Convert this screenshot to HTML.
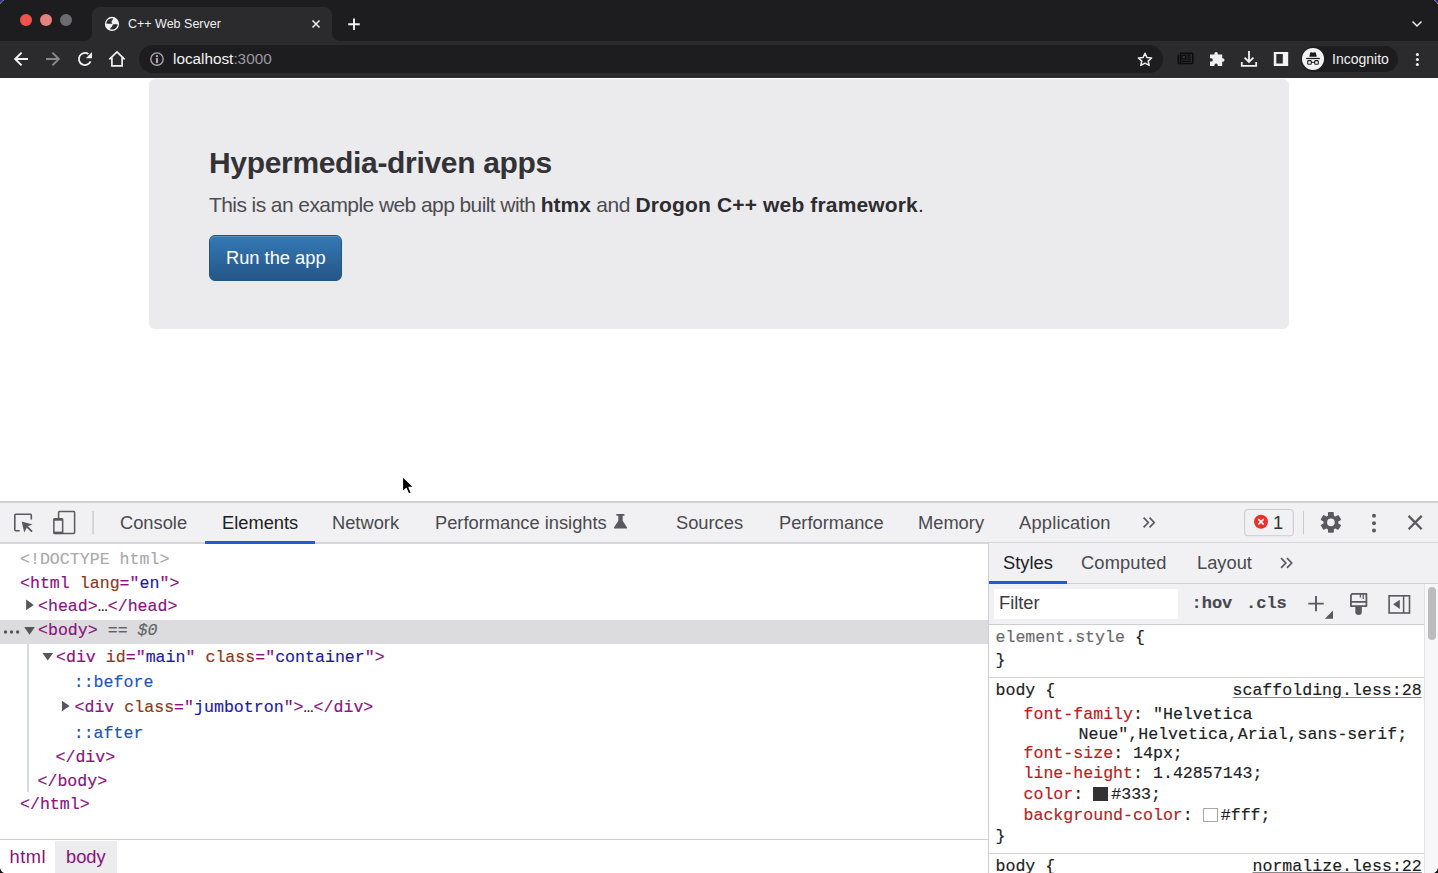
<!DOCTYPE html>
<html><head><meta charset="utf-8">
<style>
*{box-sizing:border-box}
html,body{margin:0;padding:0}
body{width:1438px;height:873px;overflow:hidden;position:relative;background:#fff;font-family:"Liberation Sans",sans-serif}
.a{position:absolute}
svg{position:absolute;overflow:visible}
/* browser chrome */
#frame{left:0;top:0;width:1438px;height:41px;background:#1d1d20}
.tl{width:12px;height:12px;border-radius:50%;top:14px}
#tab{left:92px;top:7px;width:240px;height:34px;background:#2b2b2e;border-radius:8px 8px 0 0}
#tabttl{left:128px;top:16px;font-size:12.5px;color:#f1f1f1;white-space:nowrap;line-height:16px}
#toolbar{left:0;top:41px;width:1438px;height:37px;background:#2b2b2e}
#omni{left:139px;top:45px;width:1024px;height:28px;background:#1d1d20;border-radius:14px}
#url{left:173px;top:51px;font-size:15.3px;line-height:16px;color:#f4f4f4;white-space:nowrap}
#url span{color:#9a999e}
#incog{left:1301px;top:46px;width:97px;height:26px;background:#1d1d20;border-radius:14px}
#incogtxt{left:1332px;top:51px;font-size:14px;line-height:16px;color:#f0f0f0;white-space:nowrap}
/* page */
#jumbo{left:149px;top:79px;width:1140px;height:250px;background:#ebebed;border-radius:6px}
#h1{left:209px;top:145px;font-size:30px;letter-spacing:-0.33px;font-weight:bold;color:#333236;line-height:36px;white-space:nowrap}
.lt{letter-spacing:-0.58px;color:#4d4c50}
#lead{left:209px;top:191px;font-size:21px;line-height:28px;color:#2d2c30;white-space:nowrap}
#btn{left:209px;top:235px;width:133px;height:46px;border-radius:6px;background:linear-gradient(#3479b5,#255687);border:1px solid #245580;box-shadow:inset 0 1px 0 rgba(255,255,255,.18)}
#btntxt{left:226px;top:248px;font-size:18.3px;line-height:20px;color:#fff;white-space:nowrap}
/* devtools */
#dt{left:0;top:502px;width:1438px;height:371px;background:#fff}
#dtbar{left:0;top:501px;width:1438px;height:43px;background:#f1f1f3;border-top:2px solid #d0cfd3;border-bottom:2px solid #d6d5d9}
.tabt{top:513px;font-size:18.3px;line-height:20px;color:#4a494e;white-space:nowrap}
.mono{font-family:"Liberation Mono",monospace;font-size:16.6px;line-height:20px;white-space:nowrap;-webkit-text-stroke:0.15px}
.tag{color:#881280}.pn{color:#b9201c}.an{color:#8c3819}.av{color:#1a1aa6}.ps{color:#1d55b8}
#stylespane{left:988px;top:543px;width:450px;height:330px;background:#fff;border-left:1px solid #cfced2}
</style></head><body>

<div id="frame" class="a"></div>
<div class="a tl" style="left:20px;background:#f0534c"></div>
<div class="a tl" style="left:40px;background:#e4837e"></div>
<div class="a tl" style="left:60px;background:#6c6b6f"></div>
<div class="a" style="left:84px;top:33px;width:8px;height:8px;background:radial-gradient(circle at 0 0,#1d1d20 7.5px,#2b2b2e 8.5px)"></div>
<div class="a" style="left:332px;top:33px;width:8px;height:8px;background:radial-gradient(circle at 100% 0,#1d1d20 7.5px,#2b2b2e 8.5px)"></div>
<div id="tab" class="a"></div>
<div id="tabttl" class="a">C++ Web Server</div>

<div id="toolbar" class="a"></div>
<div id="omni" class="a"></div>
<div id="url" class="a">localhost<span>:3000</span></div>
<div id="incog" class="a"></div>
<div id="incogtxt" class="a">Incognito</div>

<div id="jumbo" class="a"></div>
<div id="h1" class="a">Hypermedia-driven apps</div>
<div id="lead" class="a"><span class="lt">This is an example web app built with </span><b>htmx</b><span class="lt" style="letter-spacing:-0.42px"> and </span><b style="letter-spacing:0.15px">Drogon C++ web framework</b>.</div>
<div id="btn" class="a"></div>
<div id="btntxt" class="a">Run the app</div>

<div id="dt" class="a"></div>
<div id="dtbar" class="a"></div>
<div class="a" style="left:205px;top:541px;width:110px;height:3px;background:#1a5fd8"></div>
<div class="a tabt" style="left:120px">Console</div>
<div class="a tabt" style="left:222px;color:#202124">Elements</div>
<div class="a tabt" style="left:332px">Network</div>
<div class="a tabt" style="left:435px">Performance insights</div>
<div class="a tabt" style="left:676px">Sources</div>
<div class="a tabt" style="left:779px">Performance</div>
<div class="a tabt" style="left:918px">Memory</div>
<div class="a tabt" style="left:1019px;letter-spacing:0.2px">Application</div>

<div id="stylespane" class="a"></div>
<div class="a" style="left:1273px;top:513px;font-size:18.3px;line-height:20px;color:#333">1</div>

<div class="a" style="left:0;top:620px;width:988px;height:24px;background:#dcdcdf"></div>
<div class="a" style="left:27px;top:644px;width:2px;height:148px;background:#d5d9e2"></div>
<div class="a mono" style="left:20px;top:550px;color:#a9a8ad">&lt;!DOCTYPE html&gt;</div>
<div class="a mono" style="left:20px;top:573.5px"><span class="tag">&lt;html</span> <span class="an">lang</span><span class="tag">="</span><span class="av">en</span><span class="tag">"&gt;</span></div>
<div class="a mono" style="left:38px;top:597px"><span class="tag">&lt;head&gt;</span><span style="color:#202124">…</span><span class="tag">&lt;/head&gt;</span></div>
<div class="a mono" style="left:38px;top:621px"><span class="tag">&lt;body&gt;</span> <span style="color:#5f6368">==</span> <i style="color:#5f6368">$0</i></div>
<div class="a mono" style="left:56px;top:648px"><span class="tag">&lt;div</span> <span class="an">id</span><span class="tag">="</span><span class="av">main</span><span class="tag">"</span> <span class="an">class</span><span class="tag">="</span><span class="av">container</span><span class="tag">"&gt;</span></div>
<div class="a mono ps" style="left:73.7px;top:673px">::before</div>
<div class="a mono" style="left:74.5px;top:697.5px"><span class="tag">&lt;div</span> <span class="an">class</span><span class="tag">="</span><span class="av">jumbotron</span><span class="tag">"&gt;</span><span style="color:#202124">…</span><span class="tag">&lt;/div&gt;</span></div>
<div class="a mono ps" style="left:73.7px;top:723.5px">::after</div>
<div class="a mono tag" style="left:55.5px;top:748px">&lt;/div&gt;</div>
<div class="a mono tag" style="left:37.5px;top:771.7px">&lt;/body&gt;</div>
<div class="a mono tag" style="left:20px;top:795.3px">&lt;/html&gt;</div>

<div class="a" style="left:0;top:839px;width:988px;height:1px;background:#cfced2"></div>
<div class="a" style="left:55px;top:841px;width:62px;height:32px;background:#ececee"></div>
<div class="a tag" style="left:9.5px;top:847.4px;font-size:18.3px;line-height:20px;letter-spacing:0.5px">html</div>
<div class="a tag" style="left:66px;top:847.4px;font-size:18.3px;line-height:20px">body</div>

<div class="a" style="left:989px;top:543px;width:449px;height:41px;background:#f1f1f3;border-bottom:1px solid #cfced2"></div>
<div class="a" style="left:989px;top:581px;width:78px;height:3px;background:#1a5fd8"></div>
<div class="a tabt" style="left:1003px;top:553px;color:#202124">Styles</div>
<div class="a tabt" style="left:1081px;top:553px;letter-spacing:0.15px">Computed</div>
<div class="a tabt" style="left:1197px;top:553px">Layout</div>
<div class="a" style="left:989px;top:584px;width:436px;height:41px;background:#f1f1f3;border-bottom:1px solid #cfced2"></div>
<div class="a" style="left:994px;top:589px;width:184px;height:30px;background:#fff"></div>
<div class="a" style="left:999px;top:593px;font-size:18.3px;line-height:20px;color:#3c3b40">Filter</div>
<div class="a mono" style="left:1191.5px;top:594px;font-size:17px;font-weight:bold;color:#48474d">:hov</div>
<div class="a mono" style="left:1246px;top:594px;font-size:17px;font-weight:bold;color:#48474d">.cls</div>
<div class="a" style="left:1425px;top:584px;width:13px;height:289px;background:#f7f7f9"></div>
<div class="a" style="left:1424px;top:584px;width:1px;height:289px;background:#e3e3e6"></div>
<div class="a" style="left:1428px;top:587px;width:8px;height:53px;border-radius:4px;background:#bcbcbf"></div>

<div class="a mono" style="left:995.5px;top:628px;color:#6b6a6f">element.style <span style="color:#202124">{</span></div>
<div class="a mono" style="left:995.5px;top:651.2px;color:#202124">}</div>
<div class="a" style="left:989px;top:677px;width:435px;height:1px;background:#d5d4d8"></div>
<div class="a mono" style="left:995.5px;top:681px;color:#202124">body {</div>
<div class="a mono" style="left:1232.5px;top:681px;color:#202124;text-decoration:underline;text-decoration-color:#8a898e;text-underline-offset:1.5px">scaffolding.less:28</div>
<div class="a mono" style="left:1023.5px;top:705px;color:#202124"><span class="pn">font-family</span>: "Helvetica</div>
<div class="a mono" style="left:1078.5px;top:724.5px;color:#202124">Neue",Helvetica,Arial,sans-serif;</div>
<div class="a mono" style="left:1023.5px;top:743.5px;color:#202124"><span class="pn">font-size</span>: 14px;</div>
<div class="a mono" style="left:1023.5px;top:764px;color:#202124"><span class="pn">line-height</span>: 1.42857143;</div>
<div class="a mono" style="left:1023.5px;top:785.4px;color:#202124"><span class="pn">color</span>: <span style="display:inline-block;width:15px;height:14px;vertical-align:-2px;background:#333;margin-right:3px"></span>#333;</div>
<div class="a mono" style="left:1023.5px;top:806px;color:#202124"><span class="pn">background-color</span>: <span style="display:inline-block;width:15px;height:14px;vertical-align:-2px;background:#fff;border:1px solid #a8a7ac;margin-right:3px"></span>#fff;</div>
<div class="a mono" style="left:995.5px;top:827.3px;color:#202124">}</div>
<div class="a" style="left:989px;top:853px;width:435px;height:1px;background:#d5d4d8"></div>
<div class="a mono" style="left:995.5px;top:856.7px;color:#202124">body {</div>
<div class="a mono" style="left:1252.5px;top:856.7px;color:#202124;text-decoration:underline;text-decoration-color:#8a898e">normalize.less:22</div>



<svg class="a" style="left:0;top:0" width="1438" height="873" viewBox="0 0 1438 873">
 <!-- globe -->
 <defs><clipPath id="gc"><circle cx="112" cy="23.9" r="5.7"/></clipPath></defs>
 <circle cx="112" cy="23.9" r="7.1" fill="#f2f2f2"/>
 <g clip-path="url(#gc)" fill="#2b2b2e">
  <path d="M106 23.7 V18 H113.4 L112.4 20.3 Q111 21 111.6 22.3 L112.4 23.7 Z"/>
  <path d="M118 24.2 V30 H110 L110.6 27.7 Q112.6 26.8 112.4 25.4 L113.2 24.2 Z"/>
 </g>
 <!-- tab close -->
 <path d="M312.5 20.5 L319.5 27.5 M319.5 20.5 L312.5 27.5" stroke="#f0f0f0" stroke-width="1.5"/>
 <!-- new tab -->
 <path d="M354 18.5 V30 M348.2 24.2 H359.8" stroke="#f4f4f4" stroke-width="1.9"/>
 <!-- chevron -->
 <path d="M1412.5 21.5 L1417 26 L1421.5 21.5" stroke="#f0f0f0" stroke-width="1.5" fill="none"/>
 <!-- back / fwd -->
 <path d="M28 59 H15.5 M21.6 52.6 L15.2 59 L21.6 65.4" stroke="#f2f2f2" stroke-width="2" fill="none"/>
 <path d="M46 59 H58.5 M52.4 52.6 L58.8 59 L52.4 65.4" stroke="#88878b" stroke-width="2" fill="none"/>
 <!-- reload -->
 <path d="M90.6 61.4 A6.1 6.1 0 1 1 88.4 53.9" stroke="#f2f2f2" stroke-width="1.8" fill="none"/>
 <path d="M92 52 V58.2 H85.9 Z" fill="#f2f2f2"/>
 <!-- home -->
 <path d="M109.3 59.4 L117 51.9 L124.7 59.4" stroke="#f2f2f2" stroke-width="1.7" fill="none"/>
 <path d="M111.9 57.2 V65.9 H122.1 V57.2" stroke="#f2f2f2" stroke-width="1.7" fill="none"/>
 <!-- info -->
 <circle cx="157" cy="59.1" r="6.2" stroke="#aaa4ae" stroke-width="1.4" fill="none"/>
 <rect x="155.9" y="55.1" width="2.2" height="2" fill="#aaa4ae"/>
 <rect x="155.9" y="58.1" width="2.2" height="5" fill="#aaa4ae"/>
 <!-- star -->
 <path d="M1145 53.3 L1147 57.6 L1151.6 58 L1148.2 61.1 L1149.2 65.4 L1145 63.2 L1140.8 65.4 L1141.8 61.1 L1138.4 58 L1143 57.6 Z" stroke="#ececec" stroke-width="1.5" fill="none" stroke-linejoin="round"/>
 <!-- news (dark) -->
 <path d="M1178.3 54.8 V62.6 a0.9 0.9 0 0 0 .9 .9 H1191.9 a0.9 0.9 0 0 0 .9 -.9 V54.1 a0.9 0.9 0 0 0 -.9 -.9 H1180.6 V62.8" stroke="#0d0d0e" stroke-width="1.6" fill="none"/>
 <rect x="1182" y="55.4" width="3.6" height="3.6" stroke="#0d0d0e" stroke-width="1.4" fill="#3a3a3d"/>
 <path d="M1187.2 55.2 H1190.8 M1187.2 57.2 H1190.8 M1187.2 59.2 H1190.8 M1181.3 61.3 H1190.8" stroke="#0d0d0e" stroke-width="1.3"/>
 <!-- puzzle -->
 <path d="M1210 54.6 H1214.4 V53.6 a1.7 1.7 0 0 1 3.4 0 V54.6 H1222.2 V58.3 H1222.8 a1.7 1.7 0 0 1 0 3.4 H1222.2 V66 H1217.8 V65.3 a1.7 1.7 0 0 0 -3.4 0 V66 H1210 V61.5 H1211.2 a1.6 1.6 0 0 0 0 -3.2 H1210 Z" fill="#efefef"/>
 <!-- download -->
 <path d="M1249 51 V62.4 M1244.6 57.6 L1249 62 L1253.4 57.6 M1241.8 62 V65.8 H1256.2 V62" stroke="#f2f2f2" stroke-width="1.8" fill="none"/>
 <!-- side panel -->
 <path fill-rule="evenodd" d="M1273.8 51.9 H1288.2 V66 H1273.8 Z M1276.3 54.1 V63.6 H1282.8 V54.1 Z" fill="#f2f2f2"/>
 <!-- incognito -->
 <circle cx="1313" cy="58.9" r="11" fill="#f2f2f2"/>
 <path d="M1309.3 56.8 L1310.2 52.8 Q1310.5 52 1311.3 52.3 L1313 52.8 L1314.7 52.3 Q1315.5 52 1315.8 52.8 L1316.8 56.8 Z" fill="#1a1a1c"/>
 <rect x="1306.1" y="57.9" width="13.8" height="1.2" fill="#1a1a1c"/>
 <rect x="1307.7" y="60.6" width="3.6" height="3.7" rx="0.9" stroke="#1a1a1c" stroke-width="1.1" fill="none"/>
 <rect x="1314.7" y="60.6" width="3.6" height="3.7" rx="0.9" stroke="#1a1a1c" stroke-width="1.1" fill="none"/>
 <path d="M1311.3 62.3 H1314.7" stroke="#1a1a1c" stroke-width="1"/>
 <!-- kebab -->
 <circle cx="1417.4" cy="54.5" r="1.5" fill="#f2f2f2"/><circle cx="1417.4" cy="59.5" r="1.5" fill="#f2f2f2"/><circle cx="1417.4" cy="64.6" r="1.5" fill="#f2f2f2"/>

 <!-- cursor -->
 <path d="M402.5 476.5 L402.5 492 L406.2 488.4 L408.7 494 L411.4 492.9 L409 487.4 L414 487.4 Z" fill="#000" stroke="#fff" stroke-width="1.2" stroke-linejoin="round"/>

 <!-- devtools toolbar icons -->
 <path d="M19.7 530.7 H15.8 a1 1 0 0 1 -1 -1 V515.3 a1 1 0 0 1 1 -1 H30.3 a1 1 0 0 1 1 1 V519.4" stroke="#5b5960" stroke-width="1.6" fill="none"/>
 <path d="M21.7 521.4 L32.6 524.4 L27.6 526.2 L24.2 532.4 Z" fill="#5b5960"/>
 <path d="M27 526.6 L32 531.6" stroke="#5b5960" stroke-width="1.9"/>
 <path d="M58.6 518.2 V512.6 a1 1 0 0 1 1 -1 H73.6 a1 1 0 0 1 1 1 V532.4 a1 1 0 0 1 -1 1 H62.5" stroke="#5b5960" stroke-width="1.5" fill="none"/>
 <rect x="53.85" y="518.85" width="8.8" height="14.6" rx="1" stroke="#5b5960" stroke-width="1.5" fill="none"/>
 <rect x="53.5" y="518.5" width="9.6" height="2.2" fill="#5b5960"/>
 <rect x="53.5" y="531.6" width="9.6" height="2.5" fill="#5b5960"/>
 <rect x="92.4" y="511" width="1.3" height="23.4" fill="#c9c7cd"/>
 <!-- flask -->
 <path d="M616.4 514.1 H624.4 V515.8 H622.7 V520.8 L627 527.6 V528.5 H614 V527.6 L618.3 520.8 V515.8 H616.4 Z" fill="#5b5960"/>
 <!-- chevrons -->
 <path d="M1143.6 517.6 L1148.3 522.5 L1143.6 527.4 M1149.5 517.6 L1154.2 522.5 L1149.5 527.4" stroke="#5b5960" stroke-width="1.7" fill="none"/>
 <path d="M1281.1 558.1 L1285.8 563 L1281.1 567.9 M1287 558.1 L1291.7 563 L1287 567.9" stroke="#5b5960" stroke-width="1.7" fill="none"/>
 <!-- error badge -->
 <rect x="1244.7" y="509.5" width="48.6" height="26.3" rx="3" stroke="#c8c7cb" stroke-width="1" fill="none"/>
 <circle cx="1261" cy="521.8" r="7" fill="#e8302c"/>
 <path d="M1258.3 519.1 L1263.7 524.5 M1263.7 519.1 L1258.3 524.5" stroke="#fff" stroke-width="1.7"/>
 <rect x="1303" y="511.2" width="1" height="23.2" fill="#c9c7cd"/>
 <!-- gear -->
 <g transform="translate(1330.9 522.4)" fill="#5b5960">
  <circle r="7.4"/>
  <rect x="-2.9" y="-10.3" width="5.8" height="20.6" rx="0.8"/>
  <rect x="-2.9" y="-10.3" width="5.8" height="20.6" rx="0.8" transform="rotate(60)"/>
  <rect x="-2.9" y="-10.3" width="5.8" height="20.6" rx="0.8" transform="rotate(120)"/>
  <circle r="3.8" fill="#f1f1f3"/>
 </g>
 <circle cx="1374" cy="515.8" r="2" fill="#5b5960"/><circle cx="1374" cy="523.2" r="2" fill="#5b5960"/><circle cx="1374" cy="530.6" r="2" fill="#5b5960"/>
 <path d="M1408.6 515.9 L1421.7 529.3 M1421.7 515.9 L1408.6 529.3" stroke="#5b5960" stroke-width="2.3"/>

 <!-- styles toolbar icons -->
 <path d="M1316 596 V611.2 M1308.3 603.6 H1323.8" stroke="#5b5960" stroke-width="1.9"/>
 <path d="M1333 610.4 V618.7 H1324.8 Z" fill="#5b5960"/>
 <path d="M1351 601.8 H1366.3 M1351.9 593.9 H1366.4 V606.1 H1350.9 V595.5 Z" stroke="#5b5960" stroke-width="1.8" fill="none" stroke-linejoin="round"/>
 <path d="M1360.4 594 V597.5 M1363.2 594 V599" stroke="#5b5960" stroke-width="1.3"/>
 <path d="M1355.3 606 H1361.8 V612 a3.25 3 0 0 1 -6.5 0 Z" fill="#5b5960"/>
 <rect x="1389.1" y="595.8" width="20.4" height="17.2" stroke="#5b5960" stroke-width="1.6" fill="none"/>
 <path d="M1403.6 595.8 V613" stroke="#5b5960" stroke-width="1.5"/>
 <path d="M1393.1 604.3 L1399.8 599.8 V609 Z" fill="#5b5960"/>

 <!-- tree triangles -->
 <path d="M26.1 599.6 L33.8 605 L26.1 610.3 Z" fill="#57565b"/>
 <path d="M24.2 627.1 H34.9 L29.5 634.8 Z" fill="#57565b"/>
 <circle cx="5.5" cy="632" r="1.7" fill="#57565b"/><circle cx="11.55" cy="632" r="1.7" fill="#57565b"/><circle cx="17.6" cy="632" r="1.7" fill="#57565b"/>
 <path d="M42.4 653 H53.1 L47.75 660.6 Z" fill="#57565b"/>
 <path d="M62 700.7 L69.6 706 L62 711.3 Z" fill="#57565b"/>
 <!-- window corners -->
 <path d="M0 0 H4 Q1.5 1 0 4 Z" fill="#2a2a9a"/>
 <path d="M4 0 Q1.5 1 0 4" stroke="#8a8a90" stroke-width="1" fill="none"/>
 <path d="M1438 0 H1434 Q1436.5 1 1438 4 Z" fill="#2a2a9a"/>
 <path d="M1434 0 Q1436.5 1 1438 4" stroke="#8a8a90" stroke-width="1" fill="none"/>
 <path d="M0 868 Q1 872 4 873 H0 Z" fill="#111"/>
 <path d="M1438 868 Q1437 872 1434 873 H1438 Z" fill="#111"/>
</svg>

</body></html>
